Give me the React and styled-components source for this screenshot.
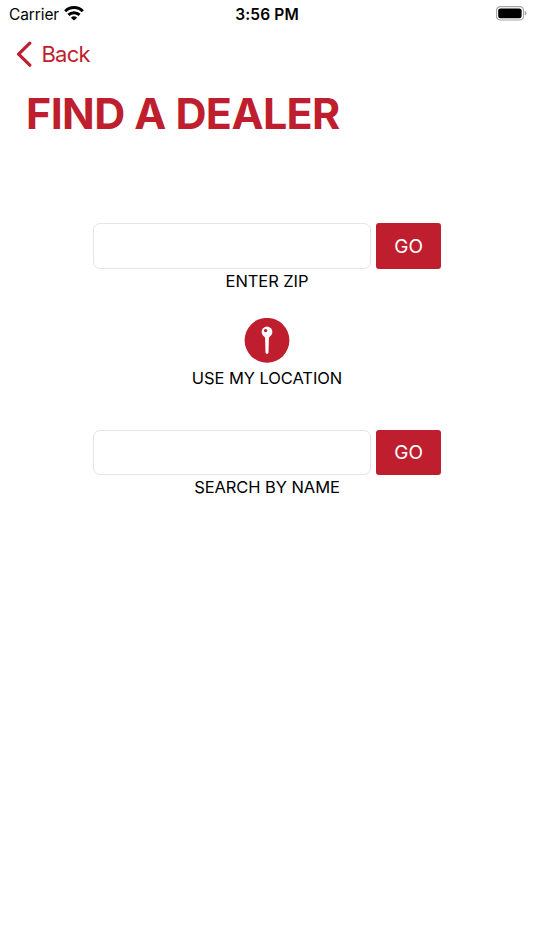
import styled, { createGlobalStyle } from "styled-components";

function SearchBlock({ label }) {
  return (
    <Block>
      <SearchRow>
        <SearchInput aria-label={label} />
        <GoButton>GO</GoButton>
      </SearchRow>
      <Label>{label}</Label>
    </Block>
  );
}

function App() {
  return (
    <Screen>
      <GlobalStyle />
      <StatusBar>
        <Carrier>
          <span>Carrier</span>
          <svg width="20" height="15" viewBox="0 0 20 15" fill="none" stroke="#000" strokeWidth="3">
            <path d="M1.2 5.2 A12.6 12.6 0 0 1 18.8 5.2" />
            <path d="M4.4 8.9 A8.1 8.1 0 0 1 15.6 8.9" />
            <path d="M10 14.6 L6.9 11.7 A4.5 4.5 0 0 1 13.1 11.7 Z" fill="#000" stroke="none" />
          </svg>
        </Carrier>
        <Time>3:56 PM</Time>
        <Battery>
          <svg width="31" height="15" viewBox="0 0 31 15">
            <rect x="0.5" y="0.6" width="27" height="13.4" rx="3.8" fill="none" stroke="#a6a6a6" strokeWidth="1.2" />
            <rect x="2.2" y="2.4" width="23.4" height="9.8" rx="2.2" fill="#000" />
            <path d="M28.8 5 Q30.5 5.6 30.5 7.3 Q30.5 9 28.8 9.6 Z" fill="#a6a6a6" />
          </svg>
        </Battery>
      </StatusBar>

      <BackButton>
        <svg width="16" height="26" viewBox="0 0 16 26" fill="none" stroke="#be1e2d" strokeWidth="3.2" strokeLinecap="round" strokeLinejoin="round">
          <path d="M13.8 2.2 L2.6 13.2 L13.8 24.2" />
        </svg>
        <span>Back</span>
      </BackButton>

      <Title>FIND A DEALER</Title>

      <Content>
        <SearchBlock label="ENTER ZIP" />
        <LocationBlock>
          <PinButton aria-label="USE MY LOCATION">
            <svg width="46" height="45" viewBox="0 0 46 45">
              <circle cx="23" cy="22.3" r="22.4" fill="#be1e2d" />
              <circle cx="23" cy="14" r="5.4" fill="#fff" />
              <path d="M20.4 18 L25.6 18 L24.9 20.5 L24.5 34.6 Q24.3 35.9 23 35.9 Q21.7 35.9 21.5 34.6 L21.1 20.5 Z" fill="#fff" />
              <circle cx="21.6" cy="12.6" r="1.7" fill="#be1e2d" />
            </svg>
          </PinButton>
          <Label>USE MY LOCATION</Label>
        </LocationBlock>
        <SearchBlock label="SEARCH BY NAME" />
      </Content>
    </Screen>
  );
}

export default App;

const GlobalStyle = createGlobalStyle`
  * {
    box-sizing: border-box;
  }
  body {
    margin: 0;
    background: #fff;
    font-family: Inter, "Liberation Sans", sans-serif;
  }
  svg {
    display: block;
    flex: none;
  }
`;

const Screen = styled.div`
  height: 950px;
  overflow: hidden;
  background: #fff;
  color: #000;
`;

const StatusBar = styled.div`
  display: grid;
  grid-template-columns: 1fr auto 1fr;
  align-items: center;
  height: 27px;
  padding: 0 7px 0 9px;
`;

const Carrier = styled.div`
  display: flex;
  align-items: center;
  gap: 5px;
  font-size: 15.5px;
  line-height: 20px;
  letter-spacing: -0.1px;

  span {
    padding-top: 2px;
  }
`;

const Time = styled.div`
  padding-top: 2px;
  margin-left: -2px;
  font-size: 15.5px;
  font-weight: 600;
  line-height: 20px;
  letter-spacing: 0.15px;
`;

const Battery = styled.div`
  display: flex;
  justify-content: flex-end;
`;

const BackButton = styled.button`
  display: flex;
  align-items: center;
  gap: 9.5px;
  height: 54px;
  padding: 0 0 0 16px;
  border: none;
  background: none;
  color: #be1e2d;
  font-family: inherit;
  font-size: 22px;
  letter-spacing: -0.8px;
`;

const Title = styled.h1`
  margin: 5px 0 0 26px;
  color: #be1e2d;
  font-size: 43px;
  font-weight: 700;
  line-height: 54px;
  letter-spacing: -0.6px;
  white-space: nowrap;
`;

const Content = styled.div`
  display: flex;
  flex-direction: column;
  align-items: center;
  padding-top: 83.3px;
`;

const Block = styled.div`
  display: flex;
  flex-direction: column;
  align-items: center;
  margin-bottom: 24.9px;
`;

const LocationBlock = styled(Block)`
  gap: 3px;
  margin-bottom: 40px;
`;

const SearchRow = styled.div`
  display: flex;
  gap: 5px;
  width: 348px;
`;

const SearchInput = styled.input`
  flex: 1;
  min-width: 0;
  height: 45.4px;
  padding: 0 10px;
  border: 1px solid #e6e6e6;
  border-radius: 7px;
  background: #fff;
  font-size: 18px;
  outline: none;
`;

const GoButton = styled.button`
  width: 64.6px;
  height: 45.4px;
  padding: 1px 0 0;
  border: none;
  border-radius: 3px;
  background: #be1e2d;
  color: #fff;
  font-family: inherit;
  font-size: 19px;
`;

const PinButton = styled.button`
  width: 46px;
  height: 45px;
  padding: 0;
  border: none;
  background: none;
`;

const Label = styled.div`
  font-size: 16.5px;
  line-height: 24px;
  letter-spacing: -0.08px;
  white-space: nowrap;
`;
